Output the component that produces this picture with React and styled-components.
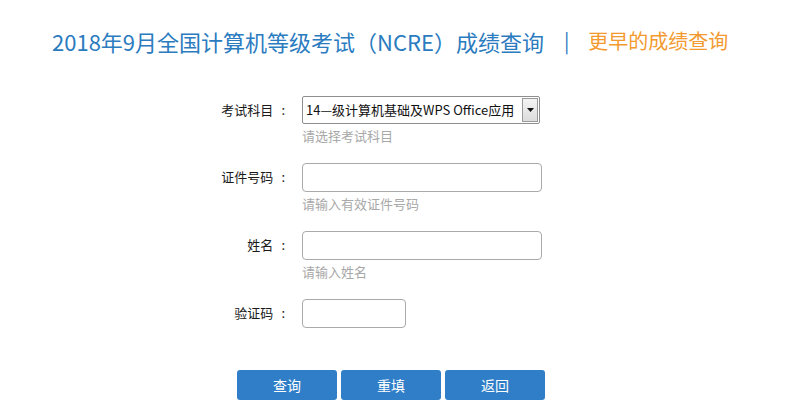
import React from "react";
import styled, { createGlobalStyle } from "styled-components";

const Global = createGlobalStyle`
  html, body { margin: 0; padding: 0; background: #fff; }
  body { font-family: "Microsoft YaHei", "Noto Sans CJK SC", "Noto Sans", sans-serif; }
`;

const Page = styled.div`
  width: 789px;
  height: 400px;
  overflow: hidden;
  background: #fff;
`;

const Header = styled.div`
  display: flex;
  align-items: center;
  padding: 26px 0 0 52px;
  height: 30px;
`;

const Title = styled.span`
  font-size: 22px;
  line-height: 30px;
  color: #2b7bbf;
`;

const Sep = styled.span`
  font-size: 20px;
  line-height: 30px;
  color: #2b7bbf;
  margin: 0 19px 0 20px;
`;

const EarlierLink = styled.a`
  font-size: 20px;
  line-height: 30px;
  color: #f39a2e;
  text-decoration: none;
`;

const Form = styled.div`
  display: grid;
  grid-template-columns: 104px auto;
  column-gap: 14px;
  row-gap: 17px;
  margin: 40px 0 0 184px;
  align-items: start;
`;

const Label = styled.div`
  display: flex;
  justify-content: flex-end;
  padding-right: 3px;
  font-size: 13px;
  line-height: 28px;
  color: #1a1a1a;
`;

const Colon = styled.span`
  margin-left: 8px;
`;

const Field = styled.div`
  display: flex;
  flex-direction: column;
  gap: 2px;
`;

const Hint = styled.div`
  font-size: 13px;
  line-height: 20px;
  color: #a8a8a8;
`;

const SelectBox = styled.div`
  box-sizing: border-box;
  width: 238px;
  height: 28px;
  border: 1px solid #8f8f8f;
  border-radius: 2px;
  display: flex;
  align-items: stretch;
  background: #fff;
`;

const SelectText = styled.span`
  flex: 1;
  font-size: 13px;
  line-height: 26px;
  color: #111;
  padding-left: 3px;
  white-space: nowrap;
  overflow: hidden;
`;

const ArrowBtn = styled.span`
  box-sizing: border-box;
  width: 16px;
  margin: 1px 1px 1px 0;
  border: 1px solid #9a9a9a;
  background: linear-gradient(#f4f4f4, #dcdcdc);
  display: flex;
  align-items: center;
  justify-content: center;
`;

const TextInput = styled.input`
  box-sizing: border-box;
  width: ${(p) => p.$w}px;
  height: 29px;
  border: 1px solid #aaaaaa;
  border-radius: 4px;
  padding: 0 6px;
  font-size: 13px;
  outline: none;
  background: #fff;
`;

const Buttons = styled.div`
  display: flex;
  gap: 4px;
  margin: 42px 0 0 237px;
`;

const Button = styled.button`
  width: 100px;
  height: 30px;
  border: none;
  border-radius: 3px;
  background: #2f7ec7;
  color: #fff;
  font-family: inherit;
  font-size: 14px;
  padding: 0;
  cursor: pointer;
`;

const rows = [
  { label: "考试科目", hint: "请选择考试科目", kind: "select" },
  { label: "证件号码", hint: "请输入有效证件号码", w: 240 },
  { label: "姓名", hint: "请输入姓名", w: 240 },
  { label: "验证码", w: 104 },
];

export default function App() {
  return (
    <Page>
      <Global />
      <Header>
        <Title>2018年9月全国计算机等级考试（NCRE）成绩查询</Title>
        <Sep>|</Sep>
        <EarlierLink href="#">更早的成绩查询</EarlierLink>
      </Header>
      <Form>
        {rows.map((r) => (
          <React.Fragment key={r.label}>
            <Label>
              {r.label}
              <Colon>:</Colon>
            </Label>
            <Field>
              {r.kind === "select" ? (
                <SelectBox>
                  <SelectText>14—级计算机基础及WPS Office应用</SelectText>
                  <ArrowBtn>
                    <svg width="7" height="4" viewBox="0 0 7 4">
                      <path d="M0 0 L7 0 L3.5 4 Z" fill="#111" />
                    </svg>
                  </ArrowBtn>
                </SelectBox>
              ) : (
                <TextInput $w={r.w} />
              )}
              {r.hint && <Hint>{r.hint}</Hint>}
            </Field>
          </React.Fragment>
        ))}
      </Form>
      <Buttons>
        <Button>查询</Button>
        <Button>重填</Button>
        <Button>返回</Button>
      </Buttons>
    </Page>
  );
}
